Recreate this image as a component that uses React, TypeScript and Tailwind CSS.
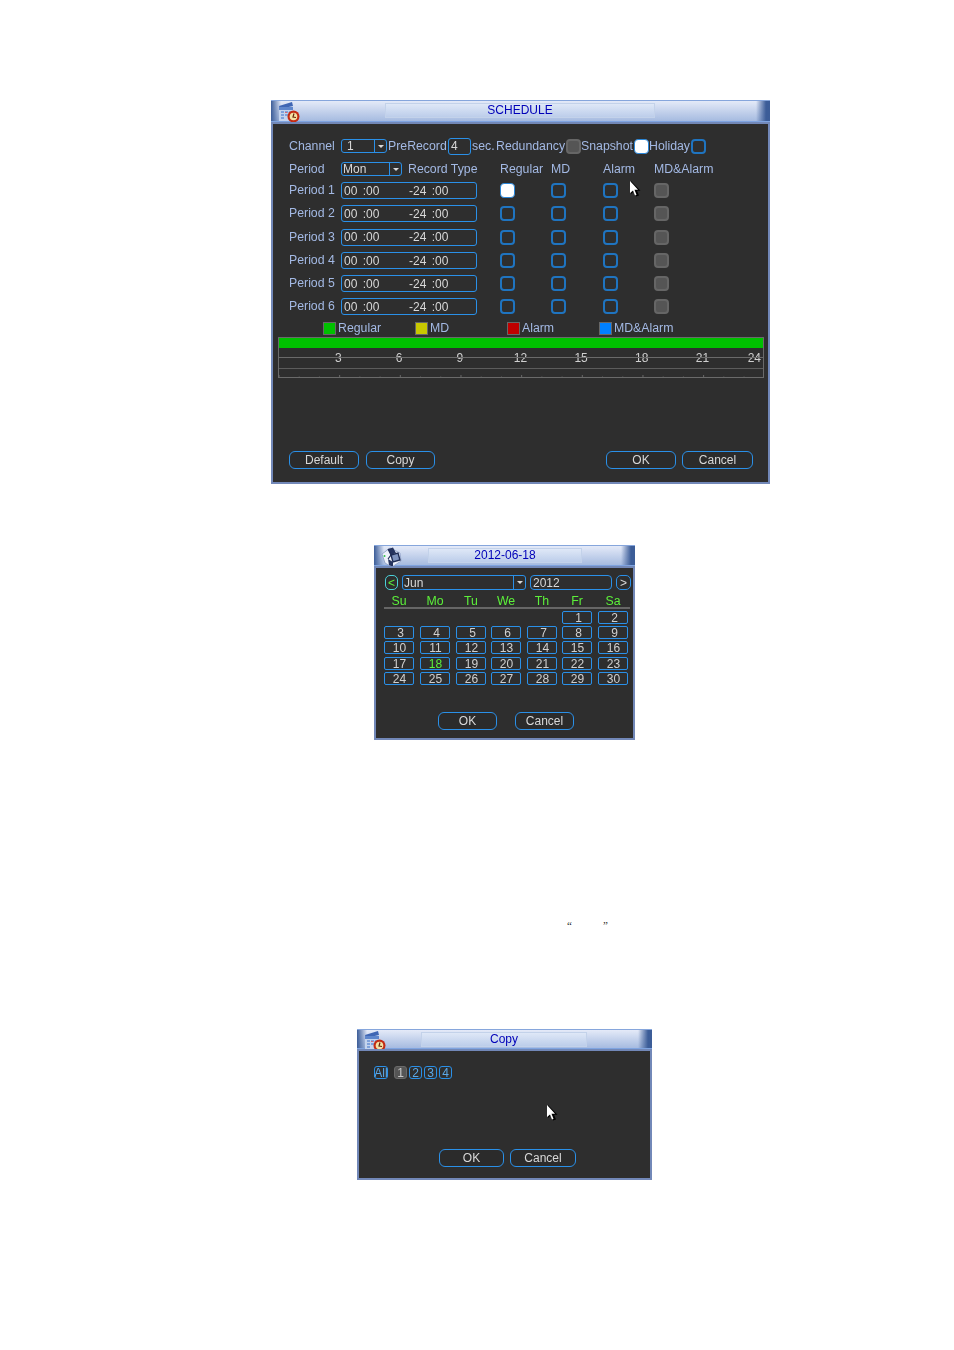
import React from 'react';

const label = 'text-[12.3px] leading-none text-[#a3b9e4] whitespace-nowrap';
const sans = "font-['Liberation_Sans',Arial,sans-serif]";

const CalendarIcon = () => (
  <svg width="23" height="22" viewBox="0 0 23 22">
    <path d="M2 5 L15 1 L16 5 L3 8 Z" fill="#3f66b4" />
    <rect x="2" y="6" width="14" height="14" fill="#c4d4ee" />
    <rect x="2" y="6" width="14" height="3" fill="#5e86cc" />
    <path d="M4 10h3v2H4zM8 10h3v2H8zM12 10h3v2h-3zM4 13h3v2H4zM8 13h3v2H8zM4 16h3v2H4z" fill="#7fa2dc" />
    <path d="M8 11h2v1H8z" fill="#d06a78" />
    <circle cx="16.5" cy="15.5" r="6" fill="#c42c14" />
    <circle cx="16.5" cy="15.5" r="3.8" fill="#f4e2a4" />
    <path d="M17 12.5 L16 16 L19 16.5" stroke="#6a2408" strokeWidth="1.2" fill="none" />
  </svg>
);

const CubeIcon = () => (
  <svg width="23" height="22" viewBox="0 0 23 22">
    <path d="M2 8 L10 2 L20 7 L21 15 L12 21 L5 17 Z" fill="#eef2fb" stroke="#8a9cc4" strokeWidth="0.8" />
    <path d="M8 3 L13 1.5 L16 7 L11 9 Z" fill="#26345e" />
    <path d="M11 9 L18 7 L20 14 L13 16 Z" fill="#7f93bd" stroke="#1f2c54" strokeWidth="1.4" />
    <path d="M8 13 L13 16 L13 21 L9 19 Z" fill="#26345e" />
    <path d="M8 3 L11 9 L8 13" stroke="#1f2c54" strokeWidth="1.2" fill="none" />
    <circle cx="4.5" cy="10" r="1" fill="#2fc24a" />
  </svg>
);

const Cursor = ({ className }: { className: string }) => (
  <svg className={className} width="12" height="18" viewBox="0 0 12 18">
    <path d="M2 1 L2 14 L5 11.5 L7 16.5 L10 15.5 L8 10.8 L11.5 10.8 Z" fill="#000" />
    <path d="M1 1 L1 13 L4 10.5 L6 15.5 L7.5 14.8 L5.5 9.8 L9 9.8 Z" fill="#fff" />
  </svg>
);

const Window = ({
  outer,
  barClass,
  boxClass,
  title,
  icon,
  children,
}: {
  outer: string;
  barClass: string;
  boxClass: string;
  title: string;
  icon: React.ReactNode;
  children: React.ReactNode;
}) => (
  <div className={`${outer} flex flex-col blur-[0.35px]`}>
    <div className={`${barClass} flex shrink-0 items-start border-y border-t-[#86a6dc] border-b-[#7fa4e0] pt-[2px] bg-[linear-gradient(90deg,#3c5d98_0,transparent_10px,transparent_calc(100%-14px),#3c5d98_calc(100%-4px),#3c5d98_100%),linear-gradient(180deg,#e4eaf8,#a6bbe0)]`}>
      <div className="-mt-[2px] flex w-[29px] shrink-0 justify-end">{icon}</div>
      <div className={`${boxClass} flex h-[15px] items-center justify-center border border-[#c3d2ea] bg-gradient-to-b from-[#dfe8f7] to-[#bccdea] pb-px text-[12px] text-[#0000b8]`}>
        {title}
      </div>
    </div>
    <div className="min-h-0 flex-1 border-2 border-[#7288b8] bg-[#2e2e2e]">{children}</div>
  </div>
);

const Check = ({ kind = 'off' }: { kind?: 'off' | 'on' | 'gray' }) => {
  const style =
    kind === 'on'
      ? 'bg-white border border-[#2a86d8]'
      : kind === 'gray'
        ? 'bg-[#555555] border-2 border-[#666666]'
        : 'bg-[#2e2e2e] border-2 border-[#1f74c0]';
  return <div className={`h-[15px] w-[15px] shrink-0 rounded-[4px] ${style}`} />;
};

const Btn = ({ className, children }: { className: string; children: React.ReactNode }) => (
  <div className={`${className} flex h-[18px] items-center justify-center rounded-[6px] border border-[#2a90e8] bg-[#2b2b2b] text-[12px] text-[#d8d8d8]`}>
    {children}
  </div>
);

const Select = ({ className, value }: { className: string; value: string }) => (
  <div className={`${className} flex h-[14px] items-center rounded-[3px] border border-[#2a90e8] text-[12px] text-[#d8d8d8]`}>
    <span className="flex-1 leading-none">{value}</span>
    <span className="flex h-full w-[12px] items-center justify-center border-l border-[#2a90e8]">
      <span className="h-0 w-0 border-x-[3px] border-t-[3px] border-x-transparent border-t-[#d8d8d8]" />
    </span>
  </div>
);

const periods = [1, 2, 3, 4, 5, 6];
const legend = [
  { name: 'Regular', color: 'bg-[#00c000]' },
  { name: 'MD', color: 'bg-[#c8c800]' },
  { name: 'Alarm', color: 'bg-[#c00000]' },
  { name: 'MD&Alarm', color: 'bg-[#0080ff]' },
];
const hours = [3, 6, 9, 12, 15, 18, 21];

const Timeline = () => {
  const ticks = Array.from({ length: 25 }, (_, i) => i);
  return (
    <div className="relative ml-[5px] h-[41px] w-[486px] border border-[#6a6a6a]">
      <div className="h-[10px] bg-[#00c000]" />
      <div className="flex h-[19px] items-center pl-[29px] text-[12px] leading-none text-[#d0d0d0]">
        {hours.map(h => (
          <span key={h} className="w-[60.7px] shrink-0 text-center">{h}</span>
        ))}
        <span className="w-[43px] shrink-0 text-center">24</span>
      </div>
      <svg className="absolute left-0 top-0" width="484" height="39" viewBox="0 0 484 39">
        <line x1="0" y1="19.5" x2="484" y2="19.5" stroke="#6a6a6a" />
        <line x1="0" y1="30.5" x2="484" y2="30.5" stroke="#5c5c5c" />
        {ticks.map(i => {
          const x = i * 20.22;
          const major = i % 3 === 0;
          return (
            <line key={i} x1={x} y1={major ? 37 : 38} x2={x} y2="39" stroke={major ? '#6a6a6a' : '#484848'} />
          );
        })}
      </svg>
    </div>
  );
};

const Schedule = () => (
  <Window
    outer="ml-[271px] h-[384px] w-[499px]"
    barClass="h-[22px]"
    boxClass="ml-[85px] w-[270px]"
    title="SCHEDULE"
    icon={<CalendarIcon />}
  >
    <div className="flex h-full flex-col pt-[11px]">
      <div className="ml-[16px] flex h-[22px] items-center">
        <span className={`${label} w-[52px]`}>Channel</span>
        <Select className="w-[46px] pl-[5px]" value="1" />
        <span className={`${label} ml-px w-[60px]`}>PreRecord</span>
        <div className="flex h-[17px] w-[23px] items-center rounded-[3px] border border-[#2a90e8] pl-[2px] text-[12px] text-[#d8d8d8]">4</div>
        <span className={`${label} ml-[1px] w-[24px]`}>sec.</span>
        <span className={`${label} w-[70px]`}>Redundancy</span>
        <Check kind="gray" />
        <span className={`${label} w-[53px]`}>Snapshot</span>
        <Check kind="on" />
        <span className={`${label} w-[42px]`}>Holiday</span>
        <Check />
      </div>
      <div className="ml-[16px] mt-[2px] grid h-[20px] grid-cols-[52px_159px_51px_52px_51px_1fr] items-center">
        <span className={label}>Period</span>
        <div className="flex items-center">
          <Select className="w-[61px] pl-[1px]" value="Mon" />
          <span className={`${label} ml-[6px]`}>Record Type</span>
        </div>
        <span className={label}>Regular</span>
        <span className={label}>MD</span>
        <span className={label}>Alarm</span>
        <span className={label}>MD&amp;Alarm</span>
      </div>
      <div className="ml-[16px] grid grid-cols-[52px_159px_51px_52px_51px_1fr] grid-rows-[23px_23px_24px_23px_23px_23px] items-center">
        {periods.map(p => (
          <React.Fragment key={p}>
            <span className={label}>Period {p}</span>
            <div className="flex h-[17px] w-[136px] items-center rounded-[3px] border border-[#2a90e8] pl-[2px] text-[12px] leading-none text-[#d8d8d8] [word-spacing:2px]">
              <span className="w-[65px]">00 :00</span>
              <span>-24 :00</span>
            </div>
            <Check kind={p === 1 ? 'on' : 'off'} />
            <Check />
            <Check />
            <Check kind="gray" />
          </React.Fragment>
        ))}
      </div>
      <div className="ml-[50px] flex h-[19px] items-center pt-[2px]">
        {legend.map(l => (
          <div key={l.name} className="flex w-[92px] items-center">
            <div className={`h-[13px] w-[13px] border border-[#666666] ${l.color}`} />
            <span className={`${label} ml-[2px]`}>{l.name}</span>
          </div>
        ))}
      </div>
      <Timeline />
      <div className="ml-[16px] mt-[73px] flex">
        <Btn className="w-[70px]">Default</Btn>
        <Btn className="ml-[7px] w-[69px]">Copy</Btn>
        <Btn className="ml-[171px] w-[70px]">OK</Btn>
        <Btn className="ml-[6px] w-[71px]">Cancel</Btn>
      </div>
    </div>
  </Window>
);

const weekDays = ['Su', 'Mo', 'Tu', 'We', 'Th', 'Fr', 'Sa'];
const days: (number | null)[] = [null, null, null, null, null, 1, 2];
for (let d = 3; d <= 30; d++) days.push(d);

const DatePicker = () => (
  <Window
    outer="ml-[374px] mt-[61px] h-[195px] w-[261px]"
    barClass="h-[21px]"
    boxClass="ml-[25px] w-[154px]"
    title="2012-06-18"
    icon={<CubeIcon />}
  >
    <div className="flex h-full flex-col pl-[8px] pt-[7px]">
      <div className="ml-px flex h-[15px] items-center text-[12px] text-[#d8d8d8]">
        <div className="flex h-[15px] w-[13px] items-center justify-center rounded-[5px] border border-[#4ad0d8] leading-none text-[#5cf03a]">&lt;</div>
        <Select className="ml-[4px] h-[15px] w-[124px] pl-px" value="Jun" />
        <div className="ml-[4px] flex h-[15px] w-[82px] items-center rounded-[4px] border border-[#2a90e8] pl-[2px]">2012</div>
        <div className="ml-[4px] flex h-[15px] w-[15px] items-center justify-center rounded-[5px] border border-[#2a90e8] leading-none">&gt;</div>
      </div>
      <div className="mt-[5px] grid h-[14px] w-[246px] grid-cols-[36px_36px_35px_36px_35px_36px_32px] items-center border-b-2 border-[#666666] text-[12.3px] leading-none text-[#5cf03a]">
        {weekDays.map(w => (
          <span key={w} className="w-[30px] text-center">{w}</span>
        ))}
      </div>
      <div className="mt-[2px] grid w-[244px] grid-cols-[36px_36px_35px_36px_35px_36px_30px] grid-rows-[15px_15px_16px_15px_15px]">
        {days.map((d, i) => (
          <div key={i} className="h-[13px] w-[30px]">
            {d !== null && (
              <div className={`flex h-[13px] items-center justify-center rounded-[2px] border border-[#2a90e8] text-[12px] leading-none ${d < 10 ? 'pl-[3px]' : 'pl-px'} ${d === 18 ? 'text-[#5cf03a]' : 'text-[#d0d0d0]'}`}>
                {d}
              </div>
            )}
          </div>
        ))}
      </div>
      <div className="ml-[54px] mt-[25px] flex">
        <Btn className="w-[59px]">OK</Btn>
        <Btn className="ml-[18px] w-[59px]">Cancel</Btn>
      </div>
    </div>
  </Window>
);

const chips = ['1', '2', '3', '4'];

const CopyDialog = () => (
  <Window
    outer="ml-[357px] mt-[97px] h-[151px] w-[295px]"
    barClass="h-[20px]"
    boxClass="ml-[35px] w-[166px]"
    title="Copy"
    icon={<CalendarIcon />}
  >
    <div className="flex h-full flex-col pl-[15px] pt-[15px]">
      <div className="flex text-[12px] leading-none">
        <div className="flex h-[13px] w-[14px] items-center justify-center rounded-[3px] border border-[#2a90e8] text-[#5aa8e8]">All</div>
        <div className="ml-[6px] flex">
          {chips.map((c, i) => (
            <div
              key={c}
              className={`mr-[2px] flex h-[13px] w-[13px] items-center justify-center rounded-[3px] border ${i === 0 ? 'border-[#6a6a6a] bg-[#555555] text-[#c8c8c8]' : 'border-[#2a90e8] text-[#5aa8e8]'}`}
            >
              {c}
            </div>
          ))}
        </div>
      </div>
      <div className="ml-[65px] mt-[70px] flex">
        <Btn className="w-[65px]">OK</Btn>
        <Btn className="ml-[6px] w-[66px]">Cancel</Btn>
      </div>
    </div>
  </Window>
);

export default function App() {
  return (
    <div className={`${sans} relative h-[1350px] w-[954px] overflow-hidden bg-white pt-[100px]`}>
      <Schedule />
      <DatePicker />
      <div className="ml-[567px] mt-[178px] flex h-[14px] items-center font-['Liberation_Serif',serif] text-[11px] text-[#222222]">
        <span className="w-[36px]">“</span>
        <span>”</span>
      </div>
      <CopyDialog />
      <Cursor className="absolute left-[629px] top-[180px]" />
      <Cursor className="absolute left-[546px] top-[1104px]" />
    </div>
  );
}
